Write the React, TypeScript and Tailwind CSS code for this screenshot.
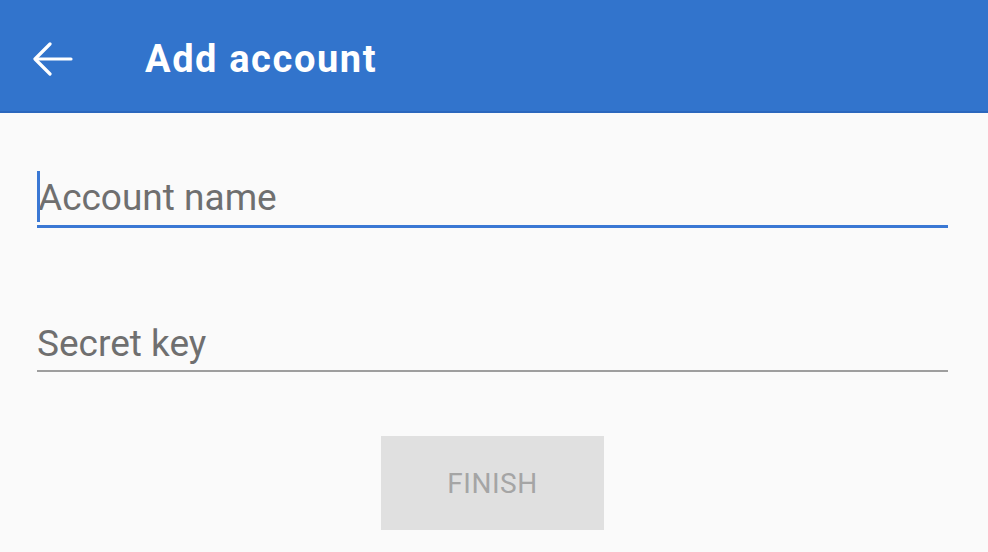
import React from 'react';

export default function App() {
  return (
    <div className="w-[988px] h-[552px] bg-[#fafafa] overflow-hidden font-['Roboto',sans-serif]">
      {/* header */}
      <header className="h-[113px] bg-[#3274cc] border-b-2 border-[#2b67bd] flex items-center">
        <button className="w-[108px] h-full flex items-center pl-[33px] pt-[6px]">
          <svg width="40" height="34" viewBox="0 0 40 34" fill="none" stroke="white" strokeWidth="3.2" strokeLinecap="round" strokeLinejoin="round">
            <path d="M38 17H3" />
            <path d="M17 2L2 17l15 15" />
          </svg>
        </button>
        <h1 className="ml-[37px] text-white text-[38px] font-bold leading-none tracking-[1.6px] pt-[6px]">Add account</h1>
      </header>

      <div className="pl-[37px] pr-[40px]">
        {/* account name */}
        <div className="mt-[58px] h-[57px] border-b-[3px] border-[#3a78d4] flex items-center relative">
          <span className="absolute left-0 top-0 w-[3px] h-[51px] bg-[#3a78d4]" />
          <span className="text-[37px] text-[#6f6f6f] leading-none pl-[1px] pb-[2px]">Account name</span>
        </div>

        {/* secret key */}
        <div className="mt-[90px] h-[54px] border-b-2 border-[#9e9e9e] flex items-center">
          <span className="text-[37px] text-[#6f6f6f] leading-none pb-[2px]">Secret key</span>
        </div>

        <div className="flex justify-center mt-[64px]">
          <button className="w-[223px] h-[94px] bg-[#e0e0e0] text-[#a5a5a5] text-[28px] tracking-[0.5px] flex items-center justify-center pt-[2px]">
            FINISH
          </button>
        </div>
      </div>
    </div>
  );
}
